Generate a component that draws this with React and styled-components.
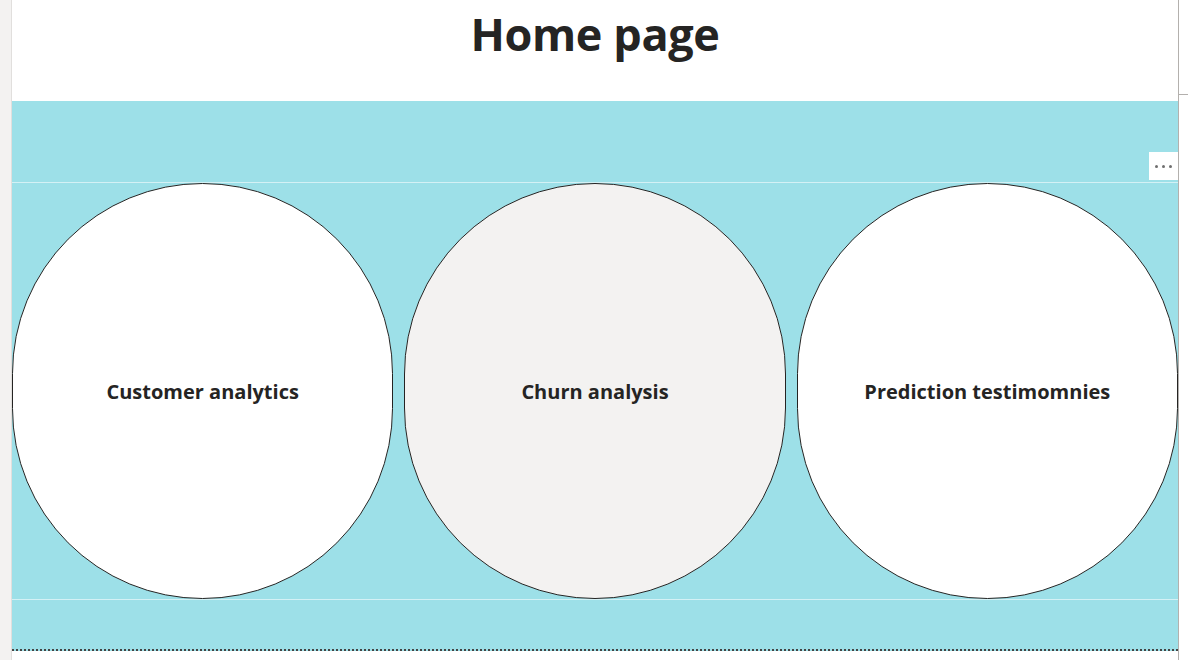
import styled, { createGlobalStyle } from "styled-components";

const GlobalStyle = createGlobalStyle`
  html, body {
    margin: 0;
    padding: 0;
    background: #ffffff;
    font-family: "Open Sans", "Noto Sans", sans-serif;
  }
`;

const Page = styled.div`
  display: flex;
  width: 1188px;
  height: 660px;
  overflow: hidden;
`;

const LeftRail = styled.div`
  width: 11px;
  flex: none;
  background: #f3f2f1;
  border-right: 1px solid #e1dfdd;
`;

const Canvas = styled.div`
  width: 1166px;
  flex: none;
  display: flex;
  flex-direction: column;
`;

const RightGutter = styled.div`
  flex: 1;
  border-left: 1px solid #b3b0ad;
  padding-top: 94px;
`;

const GutterLine = styled.div`
  border-top: 1px solid #b3b0ad;
`;

const Header = styled.header`
  height: 101px;
  display: flex;
  justify-content: center;
  box-sizing: border-box;
  padding-top: 4px;
`;

const Title = styled.h1`
  margin: 0;
  font-size: 45px;
  font-weight: 700;
  color: #252423;
  letter-spacing: -0.4px;
  line-height: 60px;
`;

const Band = styled.section`
  height: 550px;
  background: #9de0e8;
  border-bottom: 2px dotted #444;
  display: flex;
  flex-direction: column;
  box-sizing: border-box;
`;

const BandTop = styled.div`
  height: 81px;
  display: flex;
  justify-content: flex-end;
  align-items: flex-end;
  padding-bottom: 2px;
  box-sizing: border-box;
`;

const MoreButton = styled.div`
  width: 29px;
  height: 28px;
  background: #ffffff;
  display: flex;
  align-items: center;
  justify-content: center;
  gap: 4px;
`;

const Dot = styled.span`
  width: 3px;
  height: 3px;
  border-radius: 50%;
  background: #6f6f6f;
`;

const Visual = styled.div`
  height: 418px;
  box-sizing: border-box;
  border-top: 1px solid #d4f1f5;
  border-bottom: 1px solid #d4f1f5;
  display: flex;
  gap: 11px;
`;

const Bubble = styled.div`
  flex: 1;
  border: 1px solid #252423;
  border-radius: 191px;
  background: ${(p) => (p.$muted ? "#f3f2f1" : "#ffffff")};
  display: flex;
  align-items: center;
  justify-content: center;
`;

const Label = styled.span`
  font-size: 20px;
  font-weight: 700;
  color: #252423;
  letter-spacing: 0;
`;

const items = [
  { label: "Customer analytics" },
  { label: "Churn analysis", muted: true },
  { label: "Prediction testimomnies" },
];

export default function App() {
  return (
    <>
      <GlobalStyle />
      <Page>
        <LeftRail />
        <Canvas>
          <Header>
            <Title>Home page</Title>
          </Header>
          <Band>
            <BandTop>
              <MoreButton>
                <Dot />
                <Dot />
                <Dot />
              </MoreButton>
            </BandTop>
            <Visual>
              {items.map((it) => (
                <Bubble key={it.label} $muted={it.muted}>
                  <Label>{it.label}</Label>
                </Bubble>
              ))}
            </Visual>
          </Band>
        </Canvas>
        <RightGutter>
          <GutterLine />
        </RightGutter>
      </Page>
    </>
  );
}
